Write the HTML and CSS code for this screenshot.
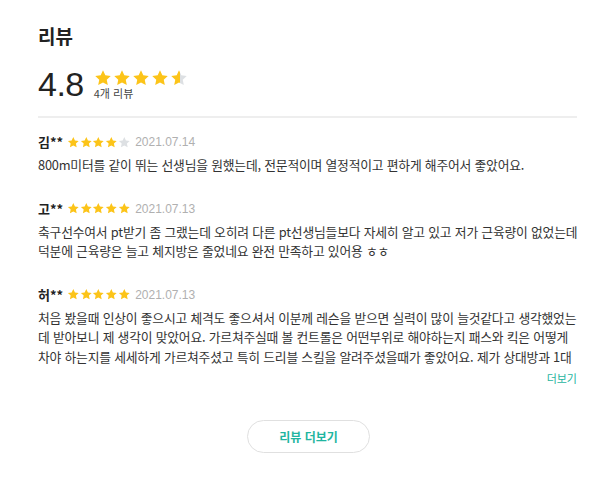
FILE: index.html
```html
<!DOCTYPE html>
<html lang="ko">
<head>
<meta charset="utf-8">
<link rel="stylesheet" href="styles.css">
</head>
<body>
<svg width="0" height="0" class="defs">
  <defs>
    <symbol id="star" viewBox="0 0 24 24"><path d="M12 1.8l3.1 6.6 7.2.9-5.3 5 1.4 7.1L12 17.9l-6.4 3.5 1.4-7.1-5.3-5 7.2-.9z"/></symbol>
    <linearGradient id="half"><stop offset="55%" stop-color="#fcc419"/><stop offset="55%" stop-color="#dde0e3"/></linearGradient>
  </defs>
</svg>
<section class="reviews">
  <h2 class="title">리뷰</h2>
  <div class="summary">
    <div class="score">4.8</div>
    <div class="summary-meta">
      <div class="stars big">
        <svg class="on"><use href="#star"/></svg><svg class="on"><use href="#star"/></svg><svg class="on"><use href="#star"/></svg><svg class="on"><use href="#star"/></svg><svg class="halfstar"><use href="#star"/></svg>
      </div>
      <div class="count">4개 리뷰</div>
    </div>
  </div>
  <ul class="list">
    <li class="review">
      <div class="head"><span class="name">김**</span>
        <span class="stars small"><svg class="on"><use href="#star"/></svg><svg class="on"><use href="#star"/></svg><svg class="on"><use href="#star"/></svg><svg class="on"><use href="#star"/></svg><svg class="off"><use href="#star"/></svg></span>
        <span class="date">2021.07.14</span></div>
      <p class="text">800m미터를 같이 뛰는 선생님을 원했는데, 전문적이며 열정적이고 편하게 해주어서 좋았어요.</p>
    </li>
    <li class="review">
      <div class="head"><span class="name">고**</span>
        <span class="stars small"><svg class="on"><use href="#star"/></svg><svg class="on"><use href="#star"/></svg><svg class="on"><use href="#star"/></svg><svg class="on"><use href="#star"/></svg><svg class="on"><use href="#star"/></svg></span>
        <span class="date">2021.07.13</span></div>
      <p class="text">축구선수여서 pt받기 좀 그랬는데 오히려 다른 pt선생님들보다 자세히 알고 있고 저가 근육량이 없었는데 덕분에 근육량은 늘고 체지방은 줄었네요 완전 만족하고 있어용 ㅎㅎ</p>
    </li>
    <li class="review">
      <div class="head"><span class="name">허**</span>
        <span class="stars small"><svg class="on"><use href="#star"/></svg><svg class="on"><use href="#star"/></svg><svg class="on"><use href="#star"/></svg><svg class="on"><use href="#star"/></svg><svg class="on"><use href="#star"/></svg></span>
        <span class="date">2021.07.13</span></div>
      <p class="text clamp">처음 봤을때 인상이 좋으시고 체격도 좋으셔서 이분께 레슨을 받으면 실력이 많이 늘것같다고 생각했었는데 받아보니 제 생각이 맞았어요. 가르쳐주실때 볼 컨트롤은 어떤부위로 해야하는지 패스와 킥은 어떻게 차야 하는지를 세세하게 가르쳐주셨고 특히 드리블 스킬을 알려주셨을때가 좋았어요. 제가 상대방과 1대</p>
      <div class="more-row"><a class="more">더보기</a></div>
    </li>
  </ul>
  <div class="btn-row"><button class="btn">리뷰 더보기</button></div>
</section>
</body>
</html>
```
FILE: styles.css
```css
* { box-sizing: border-box; }
html, body { margin: 0; padding: 0; background: #fff; }
body { font-family: "Noto Sans CJK KR", "Noto Sans", sans-serif; color: #222; }
.defs { position: absolute; }
.reviews { width: 541px; margin-left: 38px; padding-top: 22px; }
.title { font-size: 19px; font-weight: 700; margin: 0; line-height: 28px; color: #222; }
.summary { display: flex; align-items: center; gap: 12px; margin-top: 14px; margin-right: 2px; padding-bottom: 12px; border-bottom: 2px solid #eeeeee; }
.score { font-family: "Liberation Sans", Arial, sans-serif; font-size: 34px; line-height: 40px; color: #222; letter-spacing: -0.5px; }
.summary-meta { display: flex; flex-direction: column; margin-left: -2px; }
.stars { display: inline-flex; }
.stars svg { fill: #fcc419; }
.stars svg.off { fill: #dde0e3; }
.stars svg.halfstar { fill: url(#half); }
.stars.big svg { width: 18px; height: 18px; margin-right: 1px; }
.count { font-size: 11px; color: #444; line-height: 14px; margin-top: -1px; }
.list { list-style: none; margin: 0; padding: 0; }
.review { padding-top: 14px; padding-bottom: 10px; }
.head { display: flex; align-items: center; line-height: 20px; }
.name { font-size: 13px; font-weight: 700; color: #222; margin-right: 4px; }
.stars.small svg { width: 12.6px; height: 12.6px; margin-right: 0; }
.date { font-family: "Liberation Sans", Arial, sans-serif; font-size: 12px; color: #b0b0b0; margin-left: 5px; }
.text { margin: 3px 0 0; font-size: 12.8px; line-height: 19.6px; color: #333; letter-spacing: -0.2px; }
.clamp { max-height: 58.8px; overflow: hidden; }
.more-row { display: flex; justify-content: flex-end; margin-top: 3px; margin-right: 2px; }
.more { font-size: 11px; color: #1fb5a0; line-height: 16px; }
.btn-row { display: flex; justify-content: center; margin-top: 24px; }
.btn { width: 123px; height: 33px; border: 1px solid #e0e0e0; border-radius: 17px; background: #fff; font-family: inherit; font-size: 12px; font-weight: 700; color: #1fb5a0; }
```
